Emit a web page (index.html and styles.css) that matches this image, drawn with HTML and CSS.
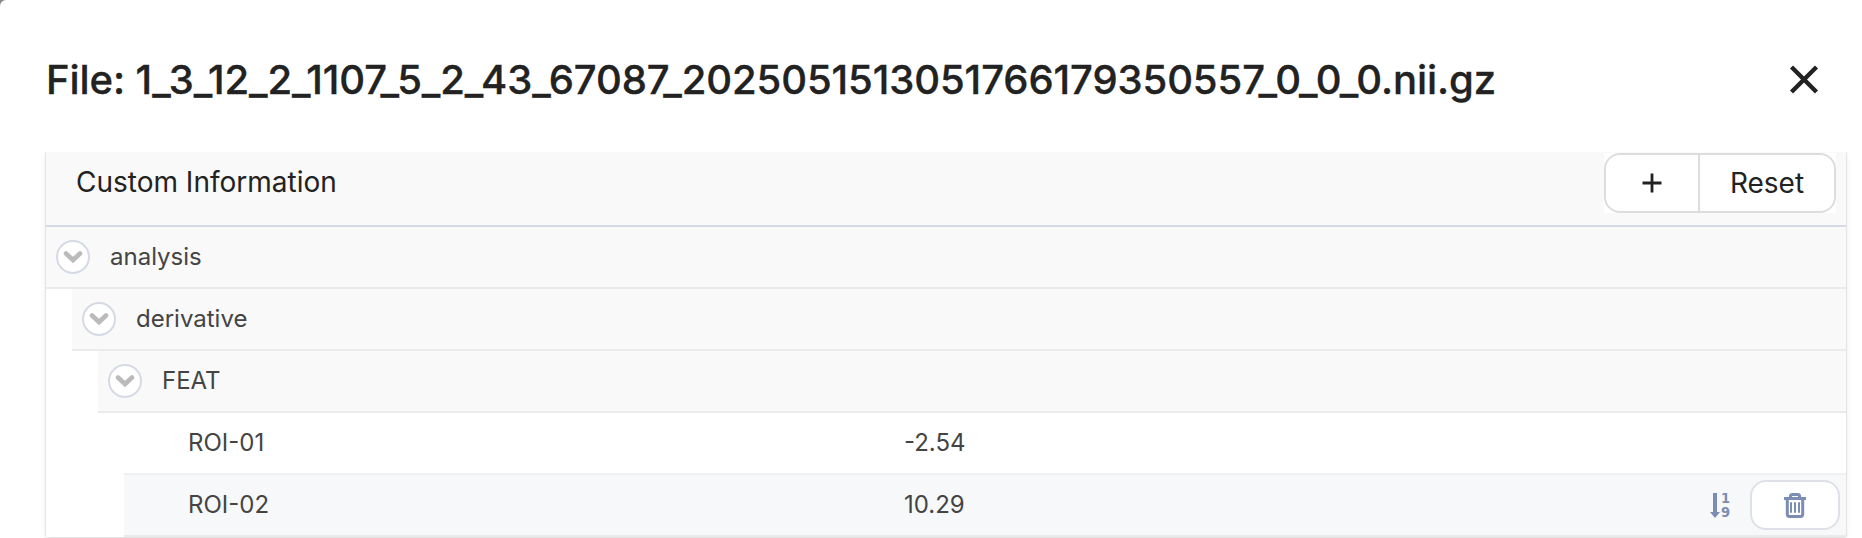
FILE: index.html
```html
<!DOCTYPE html>
<html lang="en">
<head>
<meta charset="utf-8">
<title>File details</title>
<link rel="stylesheet" href="styles.css">
</head>
<body>
<main class="dialog">
  <header class="dialog-header">
    <h1 class="dialog-title">File: 1_3_12_2_1107_5_2_43_67087_2025051513051766179350557_0_0_0.nii.gz</h1>
    <button class="close" aria-label="Close"><svg width="30" height="30" viewBox="0 0 30 30"><path d="M2.5 2 27.5 27M27.5 2 2.5 27"/></svg></button>
  </header>
  <div class="clip">
  <section class="panel">
    <div class="panel-header">
      <h2 class="panel-title">Custom Information</h2>
      <div class="actions">
        <button class="add" aria-label="Add"><svg width="20" height="20" viewBox="0 0 20 20"><path d="M10 .5V19.5M.5 10H19.5"/></svg></button>
        <button class="reset">Reset</button>
      </div>
    </div>
    <div class="row group level-0"><button class="toggle" aria-label="Collapse"><svg width="20" height="14" viewBox="0 0 20 14"><path d="M3 3.5 10 10 17 3.5"/></svg></button><span>analysis</span></div>
    <div class="row group level-1"><button class="toggle" aria-label="Collapse"><svg width="20" height="14" viewBox="0 0 20 14"><path d="M3 3.5 10 10 17 3.5"/></svg></button><span>derivative</span></div>
    <div class="row group level-2"><button class="toggle" aria-label="Collapse"><svg width="20" height="14" viewBox="0 0 20 14"><path d="M3 3.5 10 10 17 3.5"/></svg></button><span>FEAT</span></div>
    <div class="row item"><span class="key">ROI-01</span><span class="value">-2.54</span></div>
    <div class="row item active"><span class="key">ROI-02</span><span class="value">10.29</span>
      <span class="tools">
        <span class="sort">
          <svg width="10" height="25" viewBox="0 0 10 25"><path d="M3 0H7V19H10L5 25 0 19H3Z"/></svg>
          <span class="digits"><span>1</span><span>9</span></span>
        </span>
        <button class="delete" aria-label="Delete"><svg width="22" height="25" viewBox="0 0 22 25"><path class="outline" d="M0 5.5H22M3.3 5.5V21.3Q3.3 23.5 5.5 23.5H16.5Q18.7 23.5 18.7 21.3V5.5M6.4 5V3.4Q6.4 1.5 8.3 1.5H13.7Q15.6 1.5 15.6 3.4V5"/><path class="bars" d="M7 9.2V19.8M11 9.2V19.8M15 9.2V19.8"/></svg></button>
      </span>
    </div>
  </section>
  </div>
</main>
</body>
</html>
```
FILE: styles.css
```css
* { box-sizing: border-box; }
body { margin: 0; background: #888; font-family: Inter, "Liberation Sans", sans-serif; color: #222; overflow: hidden; }
button { padding: 0; margin: 0; background: #fff; border: 0; font: inherit; color: inherit; display: flex; align-items: center; justify-content: center; }
svg { display: block; fill: none; }
h1, h2 { margin: 0; white-space: nowrap; }

.dialog { height: 538px; background: #fff; border-top-left-radius: 6px; display: flex; flex-direction: column; overflow: hidden; }
.dialog-header { height: 152px; padding: 7px 43px 0 46px; display: flex; align-items: center; justify-content: space-between; flex: none; }
.dialog-title { font-size: 40px; font-weight: 500; line-height: 56px; letter-spacing: -.085px; -webkit-text-stroke: .35px #222; }
.close svg { stroke: #222; stroke-width: 4.4; }

.clip { flex: 1; padding: 0 16px 0 46px; overflow: hidden; }
.panel { background: #fff; box-shadow: 0 0 2px rgba(0, 0, 0, .25), 0 2px 8px rgba(0, 0, 0, .06); }
.panel-header { height: 75px; background: #f9f9f9; border-bottom: 2px solid #d6dae5; display: flex; justify-content: space-between; padding: 1px 10px 0 30px; }
.panel-title { font-size: 28px; font-weight: 400; line-height: 58px; }
.actions { display: flex; width: 232px; height: 60px; background: #fff; font-size: 28px; }
.add { width: 96px; border: 2px solid #ddd; border-radius: 16px 0 0 16px; }
.add svg { stroke: #222; stroke-width: 2.8; }
.reset { width: 136px; border: 2px solid #ddd; border-left: 0; border-radius: 0 16px 16px 0; }

.row { height: 62px; display: flex; align-items: center; font-size: 24px; line-height: 58px; color: #444; border-bottom: 2px solid #ebebeb; }
.group { background: #f9f9f9; padding-left: 10px; gap: 20px; }
.level-1 { margin-left: 26px; }
.level-2 { margin-left: 52px; }
.toggle { width: 34px; height: 34px; border: 2px solid #d6dae5; border-radius: 50%; }
.toggle svg { stroke: #bbb; stroke-width: 4.6; stroke-linecap: round; }
.item { margin-left: 78px; padding-left: 64px; border-bottom-color: #f0f0f0; }
.key { width: 716px; }
.active { background: #f7f8fa; border-bottom-color: #e9eaec; }
.tools { margin-left: auto; padding-right: 6px; display: flex; align-items: center; gap: 20px; }
.sort { display: flex; align-items: center; gap: 1px; color: #7b8db5; }
.sort svg { fill: currentColor; }
.digits { width: 9px; display: flex; flex-direction: column; font: 700 14.5px/14px "DejaVu Sans Condensed", "DejaVu Sans", sans-serif; font-stretch: condensed; }
.delete { width: 90px; height: 50px; border: 2px solid #dfe1e8; border-radius: 16px; }
.outline { stroke: #7b8db5; stroke-width: 3; }
.bars { stroke: #7b8db5; stroke-width: 2; }
```
